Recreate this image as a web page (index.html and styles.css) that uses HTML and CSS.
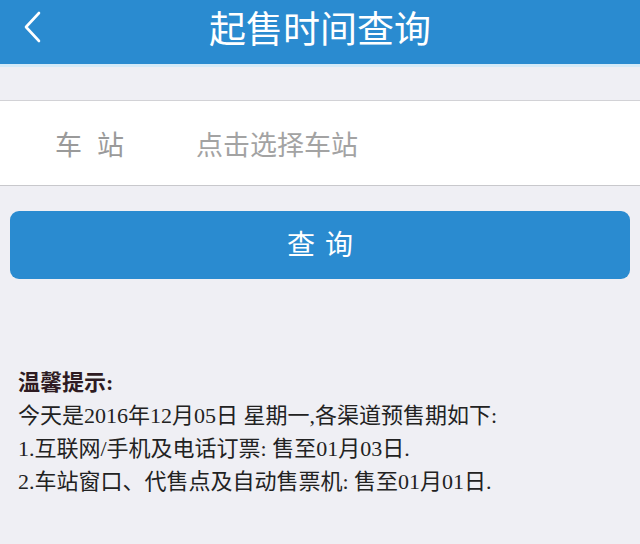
FILE: index.html
```html
<!DOCTYPE html>
<html lang="zh">
<head>
<meta charset="utf-8">
<link rel="stylesheet" href="styles.css">
</head>
<body>
<header class="topbar">
  <span class="back">
    <svg width="20" height="32" viewBox="0 0 20 32"><path d="M16 2 L3 16 L16 30" fill="none" stroke="#fff" stroke-width="2.6" stroke-linecap="round" stroke-linejoin="round"/></svg>
  </span>
  <h1 class="title">起售时间查询</h1>
</header>
<div class="strip"></div>
<section class="form">
  <div class="row">
    <span class="label">车<span class="gap"></span>站</span>
    <span class="placeholder">点击选择车站</span>
  </div>
</section>
<div class="btnwrap">
  <button class="btn">查<span class="bgap"></span>询</button>
</div>
<section class="tips">
  <p class="tips-title">温馨提示:</p>
  <p>今天是2016年12月05日 星期一,各渠道预售期如下:</p>
  <p>1.互联网/手机及电话订票: 售至01月03日.</p>
  <p>2.车站窗口、代售点及自动售票机: 售至01月01日.</p>
</section>
</body>
</html>
```
FILE: styles.css
```css
* { box-sizing: border-box; }
html, body { margin: 0; padding: 0; }
body {
  width: 640px;
  height: 544px;
  overflow: hidden;
  background: #efeff4;
  font-family: "Noto Sans CJK SC", "Noto Sans", sans-serif;
}
.topbar {
  height: 64px;
  background: #2a8bd0;
  display: flex;
  align-items: center;
  justify-content: center;
  position: relative;
}
.back {
  position: absolute;
  left: 23px;
  top: 11px;
  display: flex;
}
.title {
  margin: 0 0 10px 0;
  color: #fff;
  font-size: 37px;
  font-weight: 400;
  line-height: 44px;
}
.strip {
  height: 3px;
  background: #d4eaf8;
}
.form {
  margin-top: 33px;
  background: #fff;
  border-top: 1px solid #d2d2d6;
  border-bottom: 1px solid #c8c8cc;
}
.row {
  height: 84px;
  display: flex;
  align-items: center;
  padding-left: 55px;
  font-size: 27px;
  color: #9a9a9a;
}
.label {
  display: flex;
  width: 141px;
}
.gap { display: inline-block; width: 15px; }
.placeholder { color: #a3a3a3; }
.btnwrap {
  padding: 25px 10px 0 10px;
}
.btn {
  width: 100%;
  height: 68px;
  border: none;
  border-radius: 9px;
  background: #2a8bd0;
  color: #fff;
  font-family: "Noto Sans CJK SC", sans-serif;
  font-size: 28px;
  display: flex;
  align-items: center;
  justify-content: center;
  padding: 0 0 4px 0;
}
.bgap { display: inline-block; width: 10px; }
.tips {
  padding: 87px 0 0 18px;
  font-family: "Liberation Serif", "Noto Sans CJK SC", serif;
  font-size: 22px;
  color: #222;
}
.tips p {
  margin: 0;
  line-height: 33px;
}
.tips-title {
  font-weight: 700;
  color: #2e1b22;
}
```
